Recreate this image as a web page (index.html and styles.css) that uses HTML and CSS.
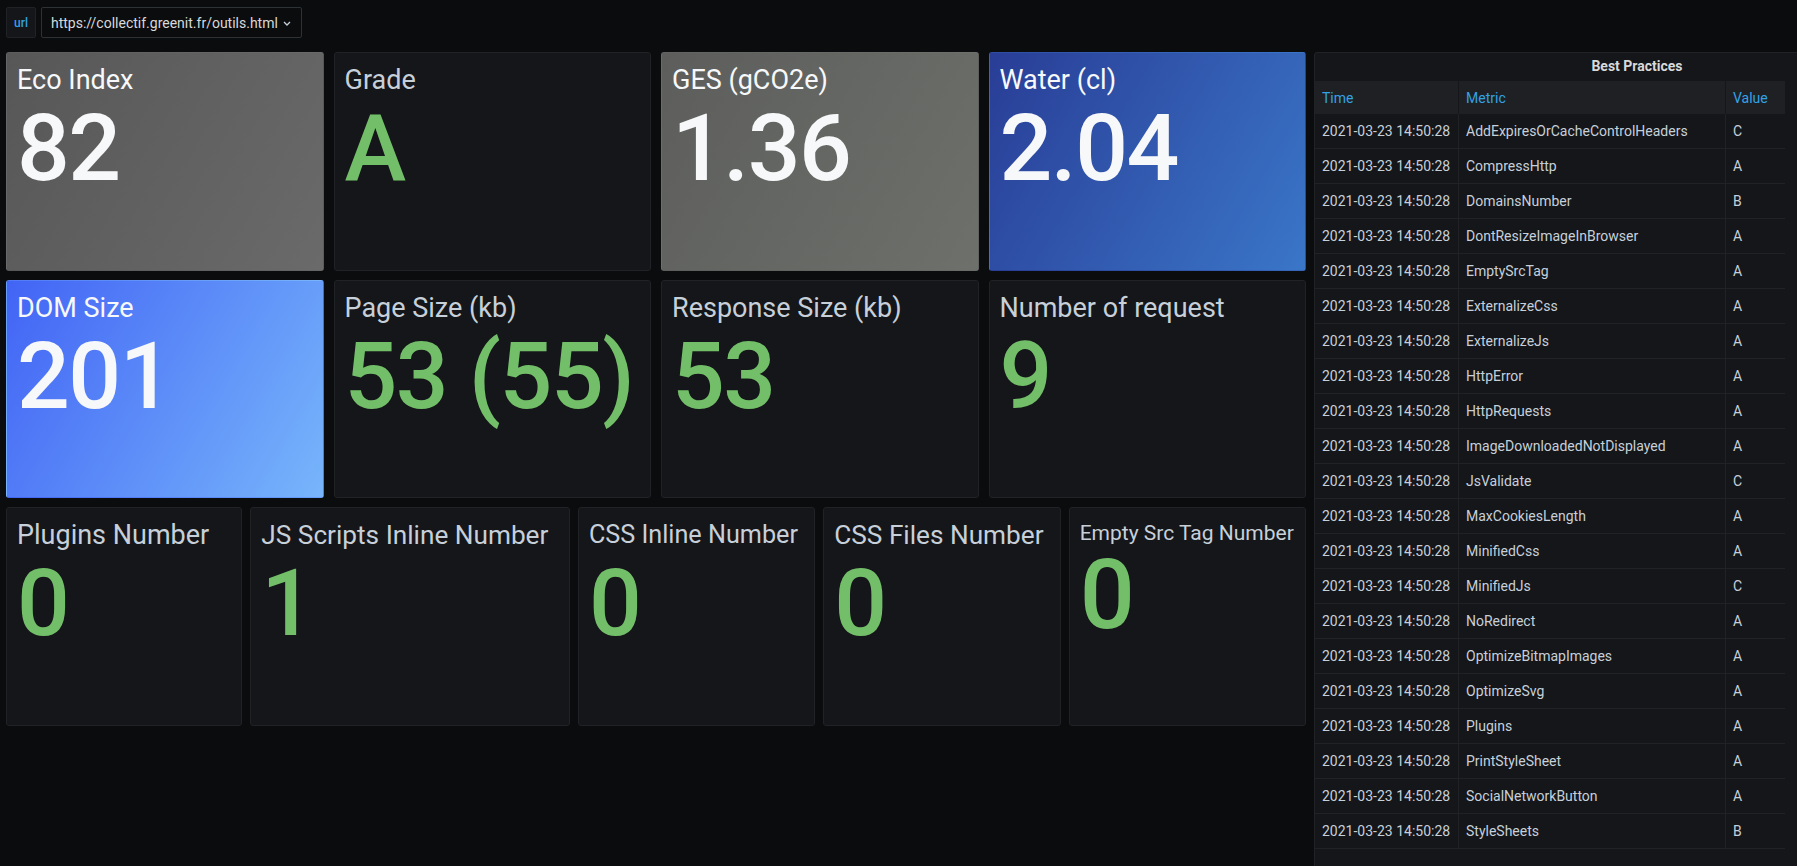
FILE: index.html
```html
<!DOCTYPE html>
<html>
<head>
<meta charset="utf-8">
<link rel="stylesheet" href="styles.css">
</head>
<body>
<div class="topbar">
  <div class="var-label">url</div>
  <div class="var-select">
    <span>https://collectif.greenit.fr/outils.html</span>
    <svg class="chev" width="8" height="5" viewBox="0 0 8 5"><polyline points="1,1 4,4 7,1" fill="none" stroke="#c7d0d9" stroke-width="1.3"/></svg>
  </div>
</div>
<div class="dashboard">
  <div class="stats">
    <div class="row row4">
      <div class="stat bg-gray"><div class="title">Eco Index</div><div class="value">82</div></div>
      <div class="stat"><div class="title">Grade</div><div class="value green">A</div></div>
      <div class="stat bg-olive"><div class="title">GES (gCO2e)</div><div class="value">1.36</div></div>
      <div class="stat bg-navy"><div class="title">Water (cl)</div><div class="value">2.04</div></div>
    </div>
    <div class="row row4">
      <div class="stat bg-blue"><div class="title">DOM Size</div><div class="value">201</div></div>
      <div class="stat"><div class="title">Page Size (kb)</div><div class="value green">53 (55)</div></div>
      <div class="stat"><div class="title">Response Size (kb)</div><div class="value green">53</div></div>
      <div class="stat"><div class="title">Number of request</div><div class="value green">9</div></div>
    </div>
    <div class="row row5">
      <div class="stat"><div class="title">Plugins Number</div><div class="value green">0</div></div>
      <div class="stat"><div class="title t26">JS Scripts Inline Number</div><div class="value green">1</div></div>
      <div class="stat"><div class="title t25">CSS Inline Number</div><div class="value green">0</div></div>
      <div class="stat"><div class="title t26">CSS Files Number</div><div class="value green">0</div></div>
      <div class="stat small"><div class="title">Empty Src Tag Number</div><div class="value green">0</div></div>
    </div>
  </div>
  <div class="table-panel">
    <div class="panel-title">Best Practices</div>
    <table class="bp">
      <thead>
        <tr><th class="c-time">Time</th><th class="c-metric">Metric</th><th class="c-val">Value</th></tr>
      </thead>
      <tbody>
        <tr><td>2021-03-23 14:50:28</td><td>AddExpiresOrCacheControlHeaders</td><td>C</td></tr>
        <tr><td>2021-03-23 14:50:28</td><td>CompressHttp</td><td>A</td></tr>
        <tr><td>2021-03-23 14:50:28</td><td>DomainsNumber</td><td>B</td></tr>
        <tr><td>2021-03-23 14:50:28</td><td>DontResizeImageInBrowser</td><td>A</td></tr>
        <tr><td>2021-03-23 14:50:28</td><td>EmptySrcTag</td><td>A</td></tr>
        <tr><td>2021-03-23 14:50:28</td><td>ExternalizeCss</td><td>A</td></tr>
        <tr><td>2021-03-23 14:50:28</td><td>ExternalizeJs</td><td>A</td></tr>
        <tr><td>2021-03-23 14:50:28</td><td>HttpError</td><td>A</td></tr>
        <tr><td>2021-03-23 14:50:28</td><td>HttpRequests</td><td>A</td></tr>
        <tr><td>2021-03-23 14:50:28</td><td>ImageDownloadedNotDisplayed</td><td>A</td></tr>
        <tr><td>2021-03-23 14:50:28</td><td>JsValidate</td><td>C</td></tr>
        <tr><td>2021-03-23 14:50:28</td><td>MaxCookiesLength</td><td>A</td></tr>
        <tr><td>2021-03-23 14:50:28</td><td>MinifiedCss</td><td>A</td></tr>
        <tr><td>2021-03-23 14:50:28</td><td>MinifiedJs</td><td>C</td></tr>
        <tr><td>2021-03-23 14:50:28</td><td>NoRedirect</td><td>A</td></tr>
        <tr><td>2021-03-23 14:50:28</td><td>OptimizeBitmapImages</td><td>A</td></tr>
        <tr><td>2021-03-23 14:50:28</td><td>OptimizeSvg</td><td>A</td></tr>
        <tr><td>2021-03-23 14:50:28</td><td>Plugins</td><td>A</td></tr>
        <tr><td>2021-03-23 14:50:28</td><td>PrintStyleSheet</td><td>A</td></tr>
        <tr><td>2021-03-23 14:50:28</td><td>SocialNetworkButton</td><td>A</td></tr>
        <tr><td>2021-03-23 14:50:28</td><td>StyleSheets</td><td>B</td></tr>
      </tbody>
    </table>
  </div>
</div>
</body>
</html>
```
FILE: styles.css
```css
html, body {
  margin: 0;
  padding: 0;
  background: #0b0c0e;
  overflow: hidden;
  height: 866px;
  font-family: Roboto, "Liberation Sans", sans-serif;
  color: #c7d0d9;
}

.topbar {
  display: flex;
  gap: 5px;
  padding: 7px 0 0 6px;
  height: 31px;
}

.var-label {
  box-sizing: border-box;
  height: 31px;
  width: 30px;
  display: flex;
  align-items: center;
  justify-content: center;
  background: #141619;
  border: 1px solid #202226;
  border-radius: 2px;
  color: #33a2e5;
  font-size: 12px;
  font-weight: 500;
}

.var-select {
  box-sizing: border-box;
  height: 31px;
  width: 261px;
  display: flex;
  align-items: center;
  gap: 5px;
  padding: 0 0 0 9px;
  background: #0b0c0e;
  border: 1px solid #2c3235;
  border-radius: 2px;
  font-size: 14px;
  color: #d8d9da;
}

.chev { margin-top: 1px; }

.dashboard {
  display: grid;
  grid-template-columns: 1300px 646px;
  column-gap: 8px;
  padding-left: 6px;
  margin-top: 14px;
  width: 1960px;
}

.stats {
  display: grid;
  grid-template-rows: 219px 218px 219px;
  row-gap: 9px;
}

.row {
  display: grid;
}

.row4 {
  grid-template-columns: repeat(4, 1fr);
  column-gap: 10px;
}

.row5 {
  grid-template-columns: 236fr 319fr 237fr 237fr 237fr;
  column-gap: 8px;
}

.stat {
  box-sizing: border-box;
  background: #141619;
  border: 1px solid #202226;
  border-radius: 3px;
  padding: 11px 10px 0 10px;
  overflow: hidden;
  color: #c7d0d9;
}

.stat .title {
  font-size: 27px;
  line-height: 32px;
  white-space: nowrap;
}

.stat .title.t26 { font-size: 26.2px; }
.stat .title.t25 { font-size: 25.2px; }

.stat .value {
  font-size: 93px;
  line-height: 93px;
  font-weight: 500;
  letter-spacing: -1.5px;
  margin-top: 6px;
  color: #f7f8fa;
  white-space: nowrap;
}

.stat .value.green { color: #73bf69; }

.stat.small .title {
  font-size: 21px;
  line-height: 26px;
  padding-top: 1px;
}

.stat.small .value {
  font-size: 97px;
  line-height: 97px;
  margin-top: 1px;
}

.bg-gray, .bg-olive, .bg-navy, .bg-blue {
  border-color: transparent;
}
.bg-gray .title, .bg-olive .title, .bg-navy .title, .bg-blue .title { color: #f7f8fa; }

.bg-gray { background: linear-gradient(120deg, #575757, #6a6a6a); }
.bg-olive { background: linear-gradient(120deg, #5d5e5c, #6d706b); }
.bg-navy { background: linear-gradient(120deg, #293d96, #3a76c8); }
.bg-blue { background: linear-gradient(120deg, #4264f5, #77b5fb); }

.table-panel {
  box-sizing: border-box;
  background: #141619;
  border: 1px solid #202226;
  border-radius: 3px;
  height: 830px;
}

.panel-title {
  height: 28px;
  line-height: 27px;
  text-align: center;
  font-size: 14px;
  font-weight: 700;
  color: #d8d9da;
}

.bp {
  border-collapse: collapse;
  width: 470px;
  font-size: 14px;
  table-layout: fixed;
}

.bp th {
  background: #1f2024;
  color: #33a2e5;
  font-weight: 400;
  text-align: left;
  height: 33px;
  padding: 0 0 0 7px;
  border-left: 1px solid #141619;
}
.bp th:first-child { border-left: none; }

.c-time { width: 136px; }
.c-metric { width: 259px; }
.c-val { width: 52px; }

.bp td {
  height: 34px;
  padding: 0 0 0 7px;
  border-bottom: 1px solid #202226;
  border-left: 1px solid #202226;
  color: #c7d0d9;
  white-space: nowrap;
}
.bp td:first-child { border-left: none; }
```
